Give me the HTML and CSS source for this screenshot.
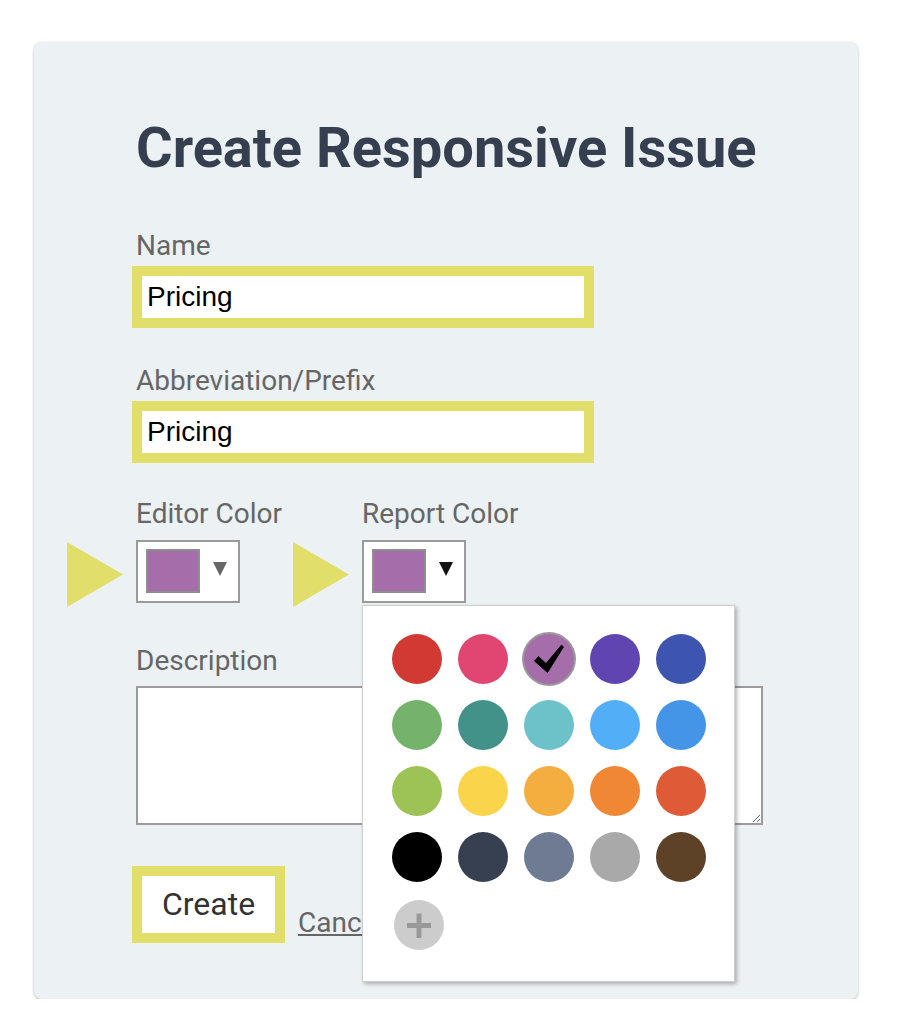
FILE: index.html
```html
<!DOCTYPE html>
<html lang="en">
<head>
<meta charset="utf-8">
<title>Create Responsive Issue</title>
<link rel="stylesheet" href="styles.css">
</head>
<body>
<div class="card">
  <h1 class="title">Create Responsive Issue</h1>

  <div class="field field-first">
    <label class="label" for="name">Name</label>
    <input class="text-input hl" id="name" value="Pricing">
  </div>

  <div class="field field-next">
    <label class="label" for="abbr">Abbreviation/Prefix</label>
    <input class="text-input hl" id="abbr" value="Pricing">
  </div>

  <div class="color-row">
    <div class="color-field">
      <div class="label color-label">Editor Color</div>
      <div class="picker-wrap">
        <svg class="pointer" width="56" height="65" viewBox="0 0 56 65"><polygon points="0,0 56,32.5 0,65" fill="#e1de69"/></svg>
        <div class="picker">
          <span class="swatch"></span>
          <svg class="caret caret-muted" width="14" height="14" viewBox="0 0 14 14"><polygon points="0,0 14,0 7,14"/></svg>
        </div>
      </div>
    </div>
    <div class="color-field">
      <div class="label color-label">Report Color</div>
      <div class="picker-wrap">
        <svg class="pointer" width="56" height="65" viewBox="0 0 56 65"><polygon points="0,0 56,32.5 0,65" fill="#e1de69"/></svg>
        <div class="picker">
          <span class="swatch"></span>
          <svg class="caret caret-dark" width="14" height="14" viewBox="0 0 14 14"><polygon points="0,0 14,0 7,14"/></svg>
        </div>
        <div class="palette">
          <span class="dot" style="background:#d03a33"></span>
          <span class="dot" style="background:#e14673"></span>
          <span class="dot dot-selected" style="background:#a56daa">
            <svg width="50" height="50" viewBox="0 0 50 50"><path d="M10.5 27 L14.5 22.5 L22 29.5 L37.5 11 L39.5 13 L23.5 38.5 Z" fill="#000" stroke="#000" stroke-width="0.8" stroke-linejoin="round"/></svg>
          </span>
          <span class="dot" style="background:#6044b0"></span>
          <span class="dot" style="background:#3d55ae"></span>

          <span class="dot" style="background:#75b36d"></span>
          <span class="dot" style="background:#43928a"></span>
          <span class="dot" style="background:#6dc2ca"></span>
          <span class="dot" style="background:#53aef8"></span>
          <span class="dot" style="background:#4495e8"></span>

          <span class="dot" style="background:#9dc356"></span>
          <span class="dot" style="background:#fad54c"></span>
          <span class="dot" style="background:#f4ad3f"></span>
          <span class="dot" style="background:#ef8735"></span>
          <span class="dot" style="background:#df5b37"></span>

          <span class="dot" style="background:#000000"></span>
          <span class="dot" style="background:#374051"></span>
          <span class="dot" style="background:#6f7b93"></span>
          <span class="dot" style="background:#a9a9a9"></span>
          <span class="dot" style="background:#5e4228"></span>

          <span class="dot dot-add">
            <svg width="50" height="50" viewBox="0 0 50 50"><path d="M13 25.5 H37 M25 13.5 V38" stroke="#999" stroke-width="5"/></svg>
          </span>
        </div>
      </div>
    </div>
  </div>

  <div class="field field-desc">
    <label class="label desc-label" for="desc">Description</label>
    <textarea class="textarea" id="desc"></textarea>
  </div>

  <div class="actions">
    <button class="btn hl" type="button">Create</button>
    <a class="cancel" href="#">Cancel</a>
  </div>
</div>
</body>
</html>
```

FILE: styles.css
```css
html, body {
  margin: 0;
  padding: 0;
  background: #ffffff;
}

body {
  font-family: Roboto, "Liberation Sans", Arial, sans-serif;
}

.card {
  width: 824px;
  margin: 42px 0 0 34px;
  padding: 74px 0 56px 102px;
  box-sizing: border-box;
  background: #ecf1f4;
  border-radius: 8px;
  box-shadow: 0 1px 3px rgba(0, 0, 0, 0.28);
}

.title {
  margin: 0;
  font-family: Roboto, sans-serif;
  font-weight: 700;
  font-size: 56px;
  line-height: 64px;
  color: #353f50;
}

.field {
  display: flex;
  flex-direction: column;
  align-items: flex-start;
}

.field-first { margin-top: 50px; }
.field-next { margin-top: 37px; }
.field-desc { margin-top: 42px; }

.label {
  display: block;
  font-size: 28px;
  line-height: 32px;
  color: #666666;
  margin-bottom: 4px;
}

.color-label { margin-bottom: 10px; }
.desc-label { margin-bottom: 9px; }

.hl {
  border: 10px solid #e1de69;
  margin-left: -4px;
}

.text-input {
  box-sizing: border-box;
  width: 462px;
  height: 62px;
  padding: 0 5px;
  background: #ffffff;
  font-family: "Liberation Sans", Arial, sans-serif;
  font-size: 28px;
  color: #000000;
  outline: none;
}

.color-row {
  display: flex;
  margin-top: 35px;
}

.color-field {
  width: 226px;
}

.picker-wrap {
  position: relative;
  width: 104px;
}

.pointer {
  position: absolute;
  left: -69px;
  top: 2px;
  display: block;
}

.picker {
  box-sizing: border-box;
  width: 104px;
  height: 63px;
  border: 2px solid #9b9b9b;
  background: #ffffff;
  display: flex;
  align-items: center;
  padding: 0 0 1px 8px;
}

.swatch {
  box-sizing: border-box;
  width: 54px;
  height: 44px;
  border: 2px solid #8e8e8e;
  background: #a56daa;
  flex: none;
}

.caret {
  display: block;
  margin-left: 13px;
  margin-top: -4px;
}

.caret-muted { fill: #666666; }
.caret-dark { fill: #111111; }

.palette {
  position: absolute;
  left: 0;
  top: 65px;
  z-index: 2;
  width: 373px;
  box-sizing: border-box;
  padding: 28px 28px 31px 29px;
  background: #ffffff;
  border: 1px solid #cfcfcf;
  box-shadow: 2px 2px 4px rgba(0, 0, 0, 0.28);
  display: grid;
  grid-template-columns: repeat(5, 50px);
  gap: 16px;
}

.dot {
  display: block;
  width: 50px;
  height: 50px;
  border-radius: 50%;
}

.dot svg {
  display: block;
}

.dot-selected {
  box-shadow: 0 0 0 2px #9a9a9a;
}

.dot-add {
  background: #cccccc;
  margin: 2px 0 0 2px;
}

.textarea {
  box-sizing: border-box;
  width: 627px;
  height: 139px;
  border: 2px solid #9b9b9b;
  background: #ffffff;
  margin: 0;
  padding: 4px;
  font-family: "Liberation Sans", Arial, sans-serif;
  font-size: 16px;
}

.actions {
  display: flex;
  align-items: flex-end;
  margin-top: 41px;
}

.btn {
  box-sizing: border-box;
  width: 153px;
  height: 77px;
  background: #ffffff;
  font-family: Roboto, sans-serif;
  font-size: 32px;
  color: #333333;
  padding: 0 0 2px 0;
  cursor: pointer;
}

.cancel {
  margin-left: 13px;
  margin-bottom: 4px;
  font-size: 28px;
  line-height: 32px;
  color: #666666;
  text-decoration: underline;
}
```
